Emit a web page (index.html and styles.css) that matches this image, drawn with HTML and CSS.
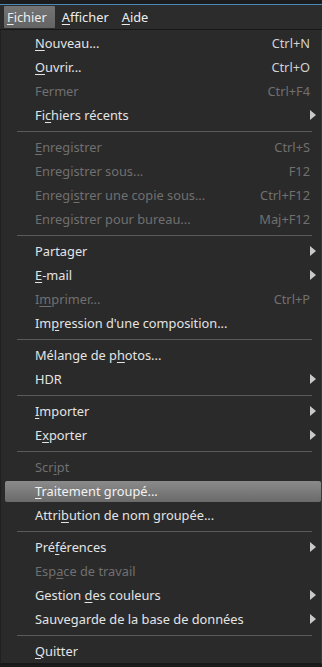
FILE: index.html
```html
<html>
<head>
<meta charset="utf-8">
<title>Fichier</title>
<link rel="stylesheet" href="styles.css">
</head>
<body>
<div class="strip"></div>
<div class="menubar">
    <span class="top on"><u>F</u>ichier</span>
    <span class="top"><u>A</u>fficher</span>
    <span class="top"><u>A</u>ide</span>
</div>
<div class="menu">
    <div class="row"><span class="label"><u>N</u>ouveau...</span><span class="key">Ctrl+N</span><i></i></div>
    <div class="row"><span class="label"><u>O</u>uvrir...</span><span class="key">Ctrl+O</span><i></i></div>
    <div class="row off"><span class="label">Fermer</span><span class="key">Ctrl+F4</span><i></i></div>
    <div class="row"><span class="label">Fi<u>c</u>hiers récents</span><span class="key"></span><i class="sub"></i></div>
    <div class="sep"></div>
    <div class="row off"><span class="label"><u>E</u>nregistrer</span><span class="key">Ctrl+S</span><i></i></div>
    <div class="row off"><span class="label">Enre<u>g</u>istrer sous...</span><span class="key">F12</span><i></i></div>
    <div class="row off"><span class="label">Enregi<u>s</u>trer une copie sous...</span><span class="key">Ctrl+F12</span><i></i></div>
    <div class="row off"><span class="label">Enregistrer pour bureau...</span><span class="key">Maj+F12</span><i></i></div>
    <div class="sep"></div>
    <div class="row"><span class="label">Partager</span><span class="key"></span><i class="sub"></i></div>
    <div class="row"><span class="label"><u>E</u>-mail</span><span class="key"></span><i class="sub"></i></div>
    <div class="row off"><span class="label">I<u>m</u>primer...</span><span class="key">Ctrl+P</span><i></i></div>
    <div class="row"><span class="label">Im<u>p</u>ression d'une composition...</span><span class="key"></span><i></i></div>
    <div class="sep"></div>
    <div class="row"><span class="label">Mélange de p<u>h</u>otos...</span><span class="key"></span><i></i></div>
    <div class="row"><span class="label">HDR</span><span class="key"></span><i class="sub"></i></div>
    <div class="sep"></div>
    <div class="row"><span class="label"><u>I</u>mporter</span><span class="key"></span><i class="sub"></i></div>
    <div class="row"><span class="label">E<u>x</u>porter</span><span class="key"></span><i class="sub"></i></div>
    <div class="sep"></div>
    <div class="row off"><span class="label">Scr<u>i</u>pt</span><span class="key"></span><i></i></div>
    <div class="row on"><span class="label"><u>T</u>raitement groupé...</span><span class="key"></span><i></i></div>
    <div class="row"><span class="label">Attri<u>b</u>ution de nom groupée...</span><span class="key"></span><i></i></div>
    <div class="sep"></div>
    <div class="row"><span class="label">Pré<u>f</u>érences</span><span class="key"></span><i class="sub"></i></div>
    <div class="row off"><span class="label">Esp<u>a</u>ce de travail</span><span class="key"></span><i></i></div>
    <div class="row"><span class="label">Gestion <u>d</u>es couleurs</span><span class="key"></span><i class="sub"></i></div>
    <div class="row"><span class="label">Sauvegarde de la base de données</span><span class="key"></span><i class="sub"></i></div>
    <div class="sep"></div>
    <div class="row"><span class="label"><u>Q</u>uitter</span><span class="key"></span><i></i></div>
</div>
</body>
</html>
```

FILE: styles.css
```css
body,div{margin:0;padding:0;}
body{background:#1b1b1b;color:#e4e4e4;font:12.8px/1 "Noto Sans","DejaVu Sans",sans-serif;width:322px;overflow:hidden;}
u{text-decoration:underline;text-underline-offset:2px;text-decoration-thickness:1px;}

.strip{height:4px;background:#1c1c1c;border-bottom:1px solid #4b8ab8;}
.menubar{display:flex;height:23px;padding:1px 0 0 4px;background:#2c2c2c;border-bottom:1px solid #171717;}
.menubar .top{display:flex;align-items:center;height:22px;padding:0 10px 0 3px;color:#ececec;}
.menubar .top.on{background:linear-gradient(#747474,#646464);padding-right:8px;margin-right:4px;border-radius:1px;}

.menu{background:#2a2a2a;padding-top:1px;border-left:1px solid #202020;border-right:1px solid #3a3a3a;border-bottom:2px solid #181818;}
.row{display:grid;grid-template-columns:1fr auto 11px;align-items:center;height:24px;padding:0 0 0 34px;}
.row .key{color:#d2d2d2;text-align:right;}
.row i{display:block;width:0;height:0;}
.row i.sub{border-left:6px solid #c9c9c9;border-top:5.5px solid transparent;border-bottom:5.5px solid transparent;}
.row.off,.row.off .key{color:#707070;}
.row.on{height:21px;margin:2px 0 1px 4px;padding-left:30px;border-radius:2px;background:linear-gradient(#8b8b8b,#6a6a6a);color:#f2f2f2;}
.sep{height:8px;margin:0 9px 0 16px;background:linear-gradient(#5a5a5a,#5a5a5a) 0 4px/100% 1px no-repeat;}
```
